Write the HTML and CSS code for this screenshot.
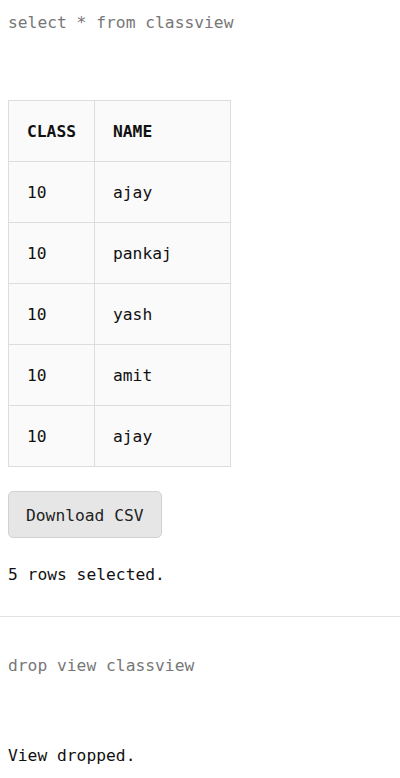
FILE: index.html
```html
<!DOCTYPE html>
<html>
<head>
<meta charset="utf-8">
<link rel="stylesheet" href="styles.css">
</head>
<body>
<section class="block">
  <p class="query">select * from classview</p>
  <table class="result">
    <thead>
      <tr><th class="c1">CLASS</th><th class="c2">NAME</th></tr>
    </thead>
    <tbody>
      <tr><td>10</td><td>ajay</td></tr>
      <tr><td>10</td><td>pankaj</td></tr>
      <tr><td>10</td><td>yash</td></tr>
      <tr><td>10</td><td>amit</td></tr>
      <tr><td>10</td><td>ajay</td></tr>
    </tbody>
  </table>
  <button class="btn">Download CSV</button>
  <p class="msg">5 rows selected.</p>
</section>
<hr class="sep">
<section class="block">
  <p class="query q2">drop view classview</p>
  <p class="msg m2">View dropped.</p>
</section>
</body>
</html>
```
FILE: styles.css
```css
html, body {
  margin: 0;
  padding: 0;
  background: #fff;
}
body {
  font-family: "DejaVu Sans Mono", "Liberation Mono", monospace;
  font-size: 16.3px;
  line-height: 24px;
  color: #111;
}
.block {
  padding: 0 8px;
  display: flex;
  flex-direction: column;
  align-items: flex-start;
}
.query {
  margin: 11px 0 0;
  color: #777;
}
.result {
  margin-top: 65px;
  border-collapse: collapse;
  width: 223px;
}
.result th, .result td {
  border: 1px solid #ddd;
  background: #fafafa;
  padding: 19px 18px 17px;
  text-align: left;
  height: 24px;
}
.result th {
  font-weight: bold;
  font-size: 16.3px;
  color: #111;
}
.result td {
  font-weight: normal;
}
.c1 { width: 49px; }
.btn {
  margin-top: 24px;
  font-family: inherit;
  font-size: 16.3px;
  line-height: 23px;
  color: #222;
  background: #e6e6e6;
  border: 1px solid #d2d2d2;
  border-radius: 5px;
  padding: 12px 17px 10px;
}
.msg {
  margin: 25px 0 0;
}
.sep {
  margin: 29px 0 0;
  border: 0;
  border-top: 1px solid #e2e2e2;
  height: 0;
}
.q2 {
  margin-top: 37px;
}
.m2 {
  margin-top: 66px;
}
```
